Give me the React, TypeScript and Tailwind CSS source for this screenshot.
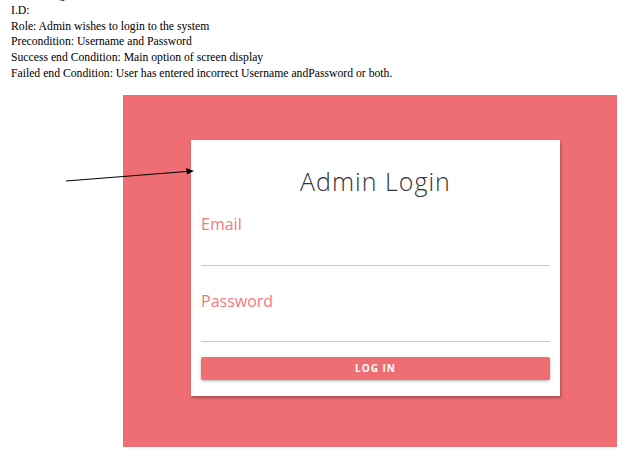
import React from "react";

export default function App() {
  return (
    <div className="relative w-[636px] h-[458px] overflow-hidden bg-white">
      <div
        className="ml-[11px] mt-[-13px] text-[11.7px] leading-[15.75px] text-black"
        style={{ fontFamily: '"Liberation Serif", "Times New Roman", serif' }}
      >
        <div>Admin Login</div>
        <div>I.D:</div>
        <div>Role: Admin wishes to login to the system</div>
        <div>Precondition: Username and Password</div>
        <div>Success end Condition: Main option of screen display</div>
        <div>Failed end Condition: User has entered incorrect Username andPassword or both.</div>
      </div>

      <div className="ml-[123px] mt-[13.5px] w-[494px] h-[352px] bg-[#ef6e73] pt-[45px] pl-[68px]">
        <div
          className="w-[369px] h-[256px] bg-white shadow-[1px_2px_3px_rgba(0,0,0,0.3)] px-[10px] pt-[24px]"
          style={{ fontFamily: '"Open Sans", "Noto Sans", sans-serif' }}
        >
          <div className="text-center text-[25px] leading-[34px] font-light tracking-[1px] text-[#333333]">
            Admin Login
          </div>
          <div className="mt-[15px] text-[16px] leading-[22px] text-[#f27a7f]">Email</div>
          <div className="h-[31px] border-b border-[#c8c8c8]" />
          <div className="mt-[24px] text-[16px] leading-[22px] text-[#f27a7f]">Password</div>
          <div className="h-[30px] border-b border-[#c8c8c8]" />
          <div className="mt-[15px] h-[23px] bg-[#ef6e73] rounded-[2px] shadow-[0_1px_3px_rgba(0,0,0,0.3)] flex items-center justify-center text-white text-[10px] font-bold tracking-[1px]">
            LOG IN
          </div>
        </div>
      </div>

      <svg className="absolute left-0 top-0 pointer-events-none" width="636" height="458">
        <line x1="66" y1="181" x2="188" y2="171.4" stroke="#000" strokeWidth="1" />
        <polygon points="194,171 186,168 187,174.5" fill="#000" />
      </svg>
    </div>
  );
}
